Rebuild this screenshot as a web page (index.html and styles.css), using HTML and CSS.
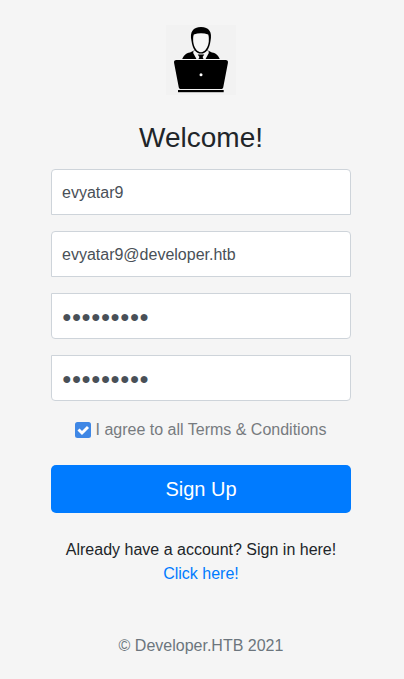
FILE: index.html
```html
<!DOCTYPE html>
<html lang="en">
<head>
<meta charset="utf-8">
<title>Sign Up</title>
<link rel="stylesheet" href="styles.css">
</head>
<body>
<form class="signup">
  <svg class="logo" viewBox="0 0 72 72" aria-hidden="true">
    <rect x="1" y="1" width="70" height="70" fill="#f2f2f2"/>
    <path d="M17 36c1-4 4-7 8-7.500l5-2.500 6 5 6-5 5 2.500c4 .5 7 3.500 8 7.500z"/>
    <path d="M28.500 27l2-1h11l2 1 .3 2-3.800 7h-8l-3.800-7z" fill="#f5f5f5"/>
    <path d="M32.700 30.500h6.600l-1.700 2.500L39 36h-6l1.400-3z"/>
    <path d="M26.500 17C24.500 8 28 3 36 3s11.500 5 9.500 14C44.500 25 41 29.600 36 29.600S27.500 25 26.500 17z"/>
    <path d="M28.200 17.500c0-2-.3-5 .6-7 4.500-1.600 9.900-1.600 14.400 0 .9 2 .6 5 .6 7-.7 6-3.800 10.700-7.800 10.700s-7.100-4.700-7.800-10.700z" fill="#f7f7f7"/>
    <path d="M11.500 36h49c2 0 2.800 1 2.400 3L58.300 63c-.3 1.500-.8 2-2.300 2H16c-1.500 0-2-.5-2.300-2L9.100 39c-.4-2 .4-3 2.400-3z"/>
    <path d="M10 35.500h52" stroke="#f5f5f5" stroke-width="1"/>
    <rect x="13" y="66" width="45.700" height="2.200"/>
    <circle cx="36" cy="50.700" r="1.500" fill="#fff"/>
  </svg>
  <h1 class="title">Welcome!</h1>
  <input class="field field-top" type="text" value="evyatar9" aria-label="Username">
  <input class="field field-top" type="email" value="evyatar9@developer.htb" aria-label="Email">
  <input class="field field-bottom" type="text" value="●●●●●●●●●" aria-label="Password">
  <input class="field field-bottom" type="text" value="●●●●●●●●●" aria-label="Confirm password">
  <div class="terms">
    <svg class="check" viewBox="0 0 16 16" aria-hidden="true">
      <rect width="16" height="16" rx="2.500" fill="#3f87e5"/>
      <path d="M3.500 7.500l3.500 3.500 6-6" fill="none" stroke="#fff" stroke-width="2.900"/>
    </svg>
    <span>I agree to all Terms &amp; Conditions</span>
  </div>
  <button class="submit" type="button">Sign Up</button>
  <p class="signin">Already have a account? Sign in here!<br><a href="#">Click here!</a></p>
  <p class="copyright">© Developer.HTB 2021</p>
</form>
</body>
</html>
```
FILE: styles.css
```css
* { box-sizing: border-box; }

body {
  margin: 0;
  background: #f5f5f5;
  color: #212529;
  font: 16px/24px "Liberation Sans", Arial, sans-serif;
}

.signup {
  display: flex;
  flex-direction: column;
  width: 300px;
  margin-left: 51px;
  padding-top: 24px;
  text-align: center;
}

.logo {
  width: 72px;
  height: 72px;
  align-self: center;
  margin-bottom: 25px;
}

.title {
  margin: 0 0 15px;
  font-size: 28px;
  font-weight: 400;
  line-height: 33px;
}

.field {
  width: 100%;
  height: 46px;
  margin: 0 0 16px;
  padding: 11px 10px 9px;
  border: 1px solid #ced4da;
  background: #fff;
  color: #495057;
  font: inherit;
  outline: 0;
}

.field-top { border-radius: 4px 4px 0 0; }
.field-bottom { border-radius: 0 0 4px 4px; }

.terms {
  display: flex;
  justify-content: center;
  align-items: center;
  gap: 5px;
  height: 24px;
  margin: 1px 0 23px;
  color: #777b7f;
}

.check {
  width: 16px;
  height: 16px;
  margin-left: -1px;
}

.submit {
  height: 48px;
  padding: 0;
  border: 0;
  border-radius: 5px;
  background: #007bff;
  color: #fff;
  font: 20px/30px "Liberation Sans", Arial, sans-serif;
}

.signin { margin: 25px 0 0; }
.signin a { color: #007bff; text-decoration: none; }

.copyright {
  margin: 48px 0 0;
  color: #6c757d;
}
```
